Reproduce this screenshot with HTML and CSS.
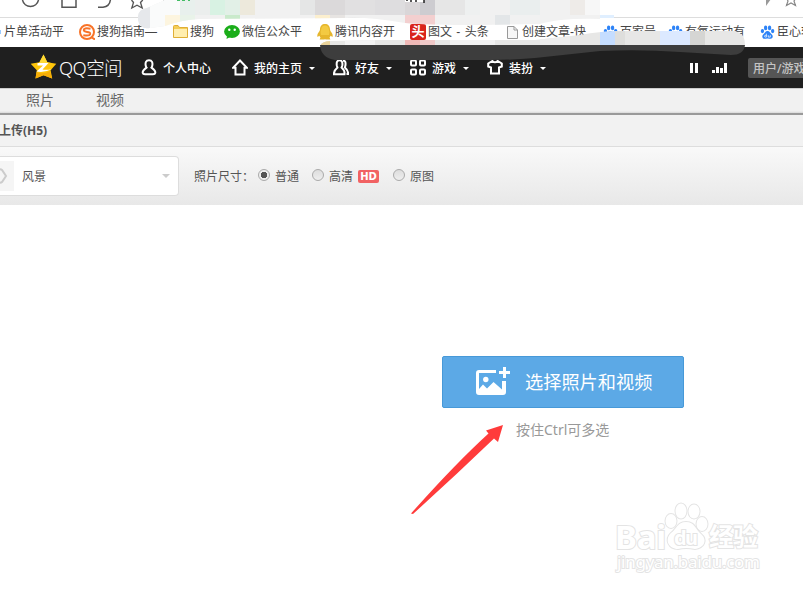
FILE: index.html
```
<!DOCTYPE html>
<html lang="zh-CN">
<head>
  <meta charset="UTF-8">
  <title>QQ空间</title>
  <link rel="stylesheet" href="styles.css">
</head>
<body>

  <svg class="defs" width="0" height="0">
    <symbol id="paw" viewBox="0 0 16 16">
      <ellipse cx="2.6" cy="7" rx="1.8" ry="2.3"/>
      <ellipse cx="6" cy="3.6" rx="1.8" ry="2.5"/>
      <ellipse cx="10.2" cy="3.6" rx="1.8" ry="2.5"/>
      <ellipse cx="13.5" cy="7" rx="1.8" ry="2.3"/>
      <path d="M8 7C5.6 7 5.3 9.2 3.6 10.4C1.6 12 2.4 15.2 5 15.2C6.4 15.2 6.8 14.9 8 14.9S9.8 15.2 11.2 15.2C14 15.2 14.3 12 12.4 10.4C10.8 9.2 10.4 7 8 7Z"/>
      <path d="M6.8 9.8V13.4H5.8Q4.8 13.4 4.8 12.5T5.8 11.6H6.8M8.8 11.4V13.4H11V11.4" fill="none" stroke="#fff" stroke-width=".8"/>
    </symbol>
  </svg>

  <!-- 浏览器工具栏 -->
  <div class="browser-bar">
    <svg width="803" height="17" fill="none" stroke="#555" stroke-width="1.5">
      <path d="M22.500 0A8.200 8.200 0 0 0 38.500 0M59.500 -1H62V7.200H76V-1H78.500M98 7.200H103Q110 6.500 110.500 -1"/>
      <path d="M131.500 0L133.500 2.500L131.800 8L137 5.200L142.200 8L140.500 2.500L142.800 0" stroke-width="1.300"/>
      <path d="M163.500 0V3" stroke="#ccc" stroke-width="1"/>
      <path d="M766 6L771 -1H766Z" fill="#999" stroke="none"/>
      <path d="M786.500 -2L788 1L786.500 5.500L791 3L795.500 5.500L794 1L796 -2" stroke="#888" stroke-width="1.200"/>
    </svg>
  </div>

  <div class="bookmarks">
    <div class="bookmark first"><i class="sliver"></i>片单活动平</div>
    <div class="bookmark">
      <svg width="16" height="16"><circle cx="8" cy="8" r="7" fill="#fff" stroke="#f87328" stroke-width="2"/><path d="M11.500 4.700Q4.500 3.500 4.800 6.200Q5 7.700 8 8Q11.500 8.400 11.200 10Q10.500 12.300 4.300 11.200" fill="none" stroke="#f87328" stroke-width="2"/><path d="M12 13L16 15.500" stroke="#f87328" stroke-width="2"/></svg>
      搜狗指南—
    </div>
    <div class="bookmark folder">
      <svg width="16" height="16"><path d="M.5 2.500Q.5 1.500 1.500 1.500H5L6.500 3.500H14.500V13.500H.5Z" fill="#f5cd56" stroke="#dfae35"/><path d="M1 5H14V13H1Z" fill="#ffeeaf"/></svg>
      搜狗
    </div>
    <div class="bookmark">
      <svg width="16" height="16"><ellipse cx="8" cy="7.500" rx="7.900" ry="6.400" fill="#1aad19"/><path d="M3 12L2.500 15L6 13Z" fill="#1aad19"/><circle cx="5.300" cy="5.800" r="1.200" fill="#fff"/><circle cx="10.700" cy="5.800" r="1.200" fill="#fff"/></svg>
      微信公众平
    </div>
    <div class="bookmark">
      <svg width="16" height="16"><path d="M8 0C5 0 3 2 3 5.500Q2.900 7 1.500 8.500Q-.3 11 .6 13L2.300 11.800L3.500 13.600L2.600 15.600H7.500L8 15L8.500 15.600H13.400L12.500 13.600L13.700 11.800L15.400 13Q16.300 11 14.500 8.500Q13.100 7 13 5.500C13 2 11 0 8 0Z" fill="#e6b62d"/><path d="M4 11Q3 8 4.500 4Q5 1.500 8 1.500Q11 1.500 11.500 4Q13 8 12 11Z" fill="#f3ca42"/></svg>
      腾讯内容开
    </div>
    <div class="bookmark wide"><span class="toutiao">头</span>图文 - 头条</div>
    <div class="bookmark">
      <svg width="15" height="16"><path d="M2.500 2.500H9L12.500 6V14.500H2.500ZM9 2.500V6H12.500" fill="#f7f7f7" stroke="#999"/></svg>
      创建文章-快
    </div>
    <div class="bookmark"><svg width="15" height="16" fill="#2d83f7"><use href="#paw"/></svg>百家号</div>
    <div class="bookmark"><svg width="15" height="16" fill="#2d83f7"><use href="#paw"/></svg>有氧运动有</div>
    <div class="bookmark"><svg width="15" height="16" fill="#2d83f7"><use href="#paw"/></svg>臣心软</div>
  </div>

  <!-- 顶部导航 -->
  <div class="nav">
    <a class="logo">
      <svg width="27" height="26" viewBox="0 0 27 26"><path d="M13.500 .5L17.300 8.200L26.300 9.700L20.600 16.200L22.200 24.500L13.500 21.300L5.500 24.500L6.800 16.200L.7 9.700L9.500 8.200Z" fill="#fec50a"/><path d="M13.500 .5L17.300 8.200L21 9L9 9Z" fill="#ffda35"/><path d="M20 17L22.200 24.500L13.500 21.300L5.500 24.500L6.500 18Q13 21 20 17Z" fill="#f6ad08"/><path d="M7.500 9H18.500L12.500 15.500Q16 16.400 22 15Q14 19.200 6.500 17.500L13 11.500H7.500Z" fill="#fff"/></svg>
      <span>QQ空间</span>
    </a>
    <a class="nav-item profile">
      <svg class="icon" viewBox="0 0 16 17"><path d="M8 1.200C4.800 1.200 4.200 4 4.700 6.500Q5 8 5.500 8.600Q1 12 1.800 14Q2 15.300 4 15.300H12Q14 15.300 14.200 14Q15 12 10.500 8.600Q11 8 11.300 6.500C11.800 4 11.200 1.200 8 1.200Z"/></svg>
      个人中心
    </a>
    <a class="nav-item">
      <svg class="icon" viewBox="0 0 16 17"><path d="M8 1.500L1 8.800H3.500V15.500H12.500V8.800H15Z"/></svg>
      我的主页<i class="caret"></i>
    </a>
    <a class="nav-item">
      <svg class="icon" viewBox="0 0 16 17"><path d="M6.500 1.200C3.800 1.200 3.400 4 3.800 6.500L4.500 8.600Q1 11.500 .8 15.300H11.500Q12 11.500 8.500 8.600L9.300 6.500C9.700 4 9.200 1.200 6.500 1.200ZM10 1.400Q13 1.500 12.500 6L11.900 8.500Q15 11 15.200 15H13.500"/></svg>
      好友<i class="caret"></i>
    </a>
    <a class="nav-item">
      <svg class="icon" viewBox="0 0 16 17"><rect x="1" y="1.500" width="5" height="5" rx="1"/><rect x="10" y="1.500" width="5" height="5" rx="1"/><rect x="1" y="10.500" width="5" height="5" rx="1"/><rect x="10" y="10.500" width="5" height="5" rx="1"/></svg>
      游戏<i class="caret"></i>
    </a>
    <a class="nav-item">
      <svg class="icon" viewBox="0 0 16 17"><path d="M5.300 2L1.200 4.500V7.500L4 8.500V14.500H12V8.500L14.800 7.500V4.500L10.700 2Q8 4.500 5.300 2Z"/></svg>
      装扮<i class="caret"></i>
    </a>
    <svg class="player" width="38" height="12" fill="#fff"><path d="M0 1H3V11H0ZM5 1H8V11H5ZM22 8H25V11H22ZM26 5H29V11H26ZM30 6H33V11H30ZM34 1H37V11H34Z"/></svg>
    <div class="search">用户/游戏</div>
  </div>

  <div class="tabs">
    <a>照片</a>
    <a>视频</a>
  </div>

  <div class="title">上传(H5)</div>

  <div class="toolbar">
    <div class="album-select">
      <div class="thumb"><svg width="14" height="30" fill="none" stroke="#ccc" stroke-width="2"><path d="M-5 10Q0 7 2 9L6 15L2 21Q0 23 -5 20"/></svg></div>
      <span>风景</span>
      <i class="caret"></i>
    </div>
    <div class="sizes">
      <span class="label">照片尺寸：</span>
      <span class="radio checked"></span><span>普通</span>
      <span class="radio second"></span><span>高清</span><b class="hd">HD</b>
      <span class="radio third"></span><span>原图</span>
    </div>
  </div>

  <div class="upload">
    <button class="upload-btn">
      <svg width="34" height="28" fill="#fff"><path d="M3 3H20V6H3V22L7 17.500L11 21.500L17.500 15L26 22.500V14H30V25Q30 28 27 28H3Q0 28 0 25V6Q0 3 3 3Z"/><circle cx="9.800" cy="12.500" r="2.700"/><path d="M27 0H30V4H34V7H30V11H27V7H23V4H27Z"/></svg>
      <span>选择照片和视频</span>
    </button>
    <div class="hint">按住Ctrl可多选</div>
  </div>

  <!-- 马赛克涂抹 -->
  <svg class="overlay" width="803" height="590">
    <defs>
      <clipPath id="top-smear"><path d="M138 16Q139 9 147 8L165 0H600V19Q560 18 540 24L480 25Q430 25 405 23Q370 17 345 18L200 19Q180 20 165 26L150 28Q140 30 138 20Z"/></clipPath>
      <clipPath id="low-smear"><path d="M320 46Q322 41 331 41L380 40H535L580 35Q600 31 625 31H735Q745 33 745 45Z"/></clipPath>
    </defs>
    <g clip-path="url(#top-smear)">
      <path d="M135 0H600V30H135Z" fill="#f1f1f1"/>
      <path d="M135 0H150V30H135Z" fill="#e6e8eb"/>
      <path d="M150 0H180V30H150Z" fill="#fafbfb"/>
      <path d="M180 0H210V15H180Z" fill="#e8f0ed"/>
      <path d="M195 0H210V15H195Z" fill="#ebeeed"/>
      <path d="M210 0H225V15H210Z" fill="#d8f2e3"/>
      <path d="M225 0H240V15H225Z" fill="#e2f0e7"/>
      <path d="M225 15H240V30H225Z" fill="#c9eacb"/>
      <path d="M240 0H255V15H240Z" fill="#ede9dc"/>
      <path d="M165 15H180V30H165Z" fill="#fdf5df"/>
      <path d="M180 15H195V30H180Z" fill="#e9f3e9"/>
      <path d="M300 0H315V15H300Z" fill="#e5e6e6"/>
      <path d="M315 0H345V15H315Z" fill="#dbd9da"/>
      <path d="M345 0H375V15H345Z" fill="#e1e0e1"/>
      <path d="M375 0H405V15H375Z" fill="#dedddf"/>
      <path d="M405 0H420V15H405Z" fill="#d9d6d8"/>
      <path d="M420 0H435V15H420Z" fill="#cdccd0"/>
      <path d="M435 0H465V15H435Z" fill="#e6e6e6"/>
      <path d="M465 0H480V15H465Z" fill="#eef0f0"/>
      <path d="M510 0H540V15H510Z" fill="#eaeeee"/>
      <path d="M570 0H585V15H570Z" fill="#eeebe8"/>
      <path d="M585 0H600V15H585Z" fill="#f7f7f7"/>
      <path d="M315 15H330V30H315Z" fill="#fcefce"/>
      <path d="M330 15H345V30H330Z" fill="#e7e4e2"/>
      <path d="M405 15H435V30H405Z" fill="#f3cfcf"/>
      <path d="M495 15H510V30H495Z" fill="#e3e6e8"/>
    </g>
    <path d="M405 0H424V2H405Z" fill="#fff"/>
    <path d="M407 0V1M411 0V2M416 0V2M424 0V3" stroke="#222" stroke-width="1.500"/>
    <path d="M177 .5H180M182 .5H185M188 .5H190" stroke="#43bd65" fill="none"/>
    <path d="M600 15H614V18H600Z" fill="#e0efff"/>
    <g clip-path="url(#low-smear)">
      <path d="M320 30H745V45H320Z" fill="#e7e7e6"/>
      <path d="M320 30H330V45H320Z" fill="#ead49b"/>
      <path d="M345 30H375V45H345Z" fill="#f3f3f3"/>
      <path d="M405 30H420V45H405Z" fill="#efb9b7"/>
      <path d="M420 30H435V45H420Z" fill="#f0c9c8"/>
      <path d="M450 30H495V45H450Z" fill="#f2f2f2"/>
      <path d="M540 30H570V45H540Z" fill="#ededed"/>
      <path d="M600 30H615V45H600Z" fill="#c5ddff"/>
      <path d="M615 30H625V45H615Z" fill="#dededc"/>
      <path d="M660 30H690V45H660Z" fill="#dce9ff"/>
      <path d="M690 30H705V45H690Z" fill="#d5d5d3"/>
    </g>
    <path d="M320 45H745Q744 55 731 55L680 52Q640 49 600 51L535 58Q510 60 490 60H335Q321 58 320 45Z" fill="#3d3d3d"/>

    <!-- 箭头 -->
    <path d="M503 425L486 430.500L488.500 433.500Q456 463 411 513.500L413 514Q455 476 494 438.500L498 442Z" fill="#ff3b3b"/>

    <g class="watermark">
      <text x="615" y="549" font-size="33" font-weight="bold" textLength="51">Bai</text>
      <ellipse cx="671" cy="521" rx="5.500" ry="7"/>
      <ellipse cx="681" cy="511" rx="5.500" ry="7.500"/>
      <ellipse cx="694" cy="511.500" rx="5.500" ry="7"/>
      <ellipse cx="702" cy="524" rx="5.500" ry="7"/>
      <path d="M686 522C677 522 677 529 671 533C664 540 669 549 678 549Q686 547 695 549C704 548 708 540 701 534C695 529 695 522 686 522Z"/>
      <text x="674" y="545" font-size="20" font-weight="bold" textLength="24">du</text>
      <text x="709" y="546" font-size="25" font-weight="bold" textLength="49">经验</text>
      <text x="617" y="568" font-size="17" textLength="143">jingyan.baidu.com</text>
    </g>
  </svg>

</body>
</html>
```
FILE: styles.css
```
* {
  box-sizing: border-box;
}

body {
  margin: 0;
  height: 590px;
  overflow: hidden;
  position: relative;
  background: #fff;
  color: #555;
  font: 12px/16px "Noto Sans", "Noto Sans CJK SC", sans-serif;
  white-space: nowrap;
}

svg {
  display: block;
  flex: none;
}

.defs {
  position: absolute;
}

.browser-bar {
  height: 18px;
  border-bottom: 1px solid #ddd;
}

.bookmarks {
  height: 29px;
  padding-bottom: 2px;
  display: grid;
  grid-template-columns: 79px 94px 51px 93px 93px 95px 98px 65px 92px 60px;
  align-items: center;
  color: #444;
  font-family: "Liberation Sans", "Noto Sans CJK SC", sans-serif;
}

.bookmark {
  display: flex;
  align-items: center;
  gap: 2px;
}

.first {
  gap: 3px;
}

.folder {
  gap: 1px;
}

.wide {
  word-spacing: 1px;
}

.sliver {
  width: 1px;
  height: 4px;
  background: #9acbff;
}

.toutiao {
  width: 16px;
  height: 16px;
  border-radius: 2px;
  background: #d9251c;
  color: #fff;
  font-size: 13px;
  line-height: 15px;
  text-align: center;
  font-weight: bold;
}

.nav {
  height: 41px;
  display: flex;
  align-items: center;
  padding-left: 30px;
  background: #1f1f1f;
  color: #fff;
  font-weight: 500;
}

.logo {
  display: flex;
  align-items: center;
  gap: 2px;
  width: 111px;
  font-size: 18.500px;
  font-weight: 300;
  letter-spacing: -.6px;
}

.logo svg {
  margin-top: -1px;
}

.nav-item {
  display: flex;
  align-items: center;
  gap: 6px;
  margin-right: 18px;
  font-family: "Noto Sans CJK SC", sans-serif;
}

.profile {
  margin-right: 21px;
}

.icon {
  width: 16px;
  height: 17px;
  fill: none;
  stroke: #fff;
  stroke-width: 2;
}

.caret {
  border: 3px solid transparent;
  border-top-color: #fff;
  border-bottom: 0;
}

.nav .caret {
  margin-left: 1px;
  margin-top: 1px;
}

.player {
  margin-left: auto;
}

.search {
  width: 55px;
  height: 20px;
  margin-left: 20px;
  padding: 3px 5px;
  border-radius: 2px 0 0 2px;
  background: #555;
  color: #c4c4c4;
  overflow: hidden;
}

.tabs {
  height: 27px;
  padding: 0 26px 3px;
  display: flex;
  align-items: center;
  gap: 42px;
  border-top: 1px solid #ccc;
  border-bottom: 2px solid #9a9a9a;
  background: linear-gradient(#f1f1f1 22px, #d8d8d8);
  color: #666;
  font-size: 14px;
}

.title {
  height: 32px;
  padding-top: 8px;
  margin-left: -1px;
  border-bottom: 1px solid #ddd;
  background: #f2f2f2;
  font-weight: bold;
}

.toolbar {
  height: 58px;
  display: flex;
  align-items: center;
  background: linear-gradient(#f9f9f9, #e8e8e8);
}

.album-select {
  width: 179px;
  height: 40px;
  display: flex;
  align-items: center;
  gap: 8px;
  padding-right: 8px;
  border: 1px solid #ddd;
  border-left: 0;
  border-radius: 0 4px 4px 0;
  background: #fff;
}

.album-select span {
  padding-top: 1px;
}

.album-select .caret {
  margin-left: auto;
  border-width: 4px 4px 0;
  border-top-color: #ccc;
}

.thumb {
  width: 14px;
  height: 30px;
  background: #f5f5f5;
}

.sizes {
  display: flex;
  align-items: center;
  margin-left: 15px;
  padding-top: 1px;
}

.label {
  width: 64px;
}

.radio {
  width: 12px;
  height: 12px;
  margin: -3px 5px 0 0;
  border: 1px solid #aaa;
  border-radius: 50%;
  background: linear-gradient(#ddd, #eee);
}

.checked {
  background: radial-gradient(#555 0 3px, #eee 3.500px);
}

.second {
  margin-left: 13px;
}

.third {
  margin-left: 14px;
}

.hd {
  width: 21px;
  height: 13px;
  margin-left: 5px;
  border-radius: 2px;
  background: #f16263;
  color: #fff;
  font: bold 10px/13px "DejaVu Sans", sans-serif;
  text-align: center;
}

.upload {
  width: 242px;
  margin: 151px 0 0 442px;
}

.upload-btn {
  width: 242px;
  height: 52px;
  padding: 0 0 2px 33px;
  display: flex;
  align-items: center;
  gap: 15px;
  border: 1px solid #4799d8;
  border-radius: 2px;
  background: #5ca9e6;
  color: #fff;
  font: 18.200px/24px "Noto Sans CJK SC", sans-serif;
}

.hint {
  padding: 12px 0 0 74px;
  color: #999;
  font-size: 14px;
  line-height: 20px;
}

.overlay {
  position: absolute;
  top: 0;
  left: 0;
  pointer-events: none;
}

.watermark {
  fill: #fff;
  stroke: #e4e4e4;
  stroke-width: 2;
  paint-order: stroke;
}
```
